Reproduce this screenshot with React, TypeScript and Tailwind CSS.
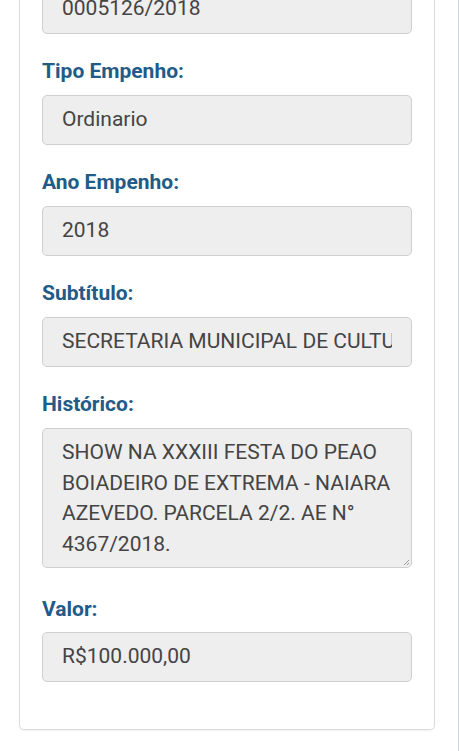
export default function App() {
  const fields: { label: string; value: string }[] = [
    { label: "Tipo Empenho:", value: "Ordinario" },
    { label: "Ano Empenho:", value: "2018" },
    { label: "Subtítulo:", value: "SECRETARIA MUNICIPAL DE CULTURA" },
  ];
  const font = { fontFamily: "Roboto, 'Noto Sans', sans-serif" };
  return (
    <div className="w-[459px] h-[751px] bg-white border-r border-[#c9d6e3] overflow-hidden" style={font}>
      <div className="ml-[19px] w-[416px] border-x border-b border-[#dcdcdc] rounded-b-[5px] shadow-[0_1px_2px_rgba(0,0,0,0.06)] px-[22px] pb-[47px]">
        <div className="-mt-[16px] h-[50px] rounded-[5px] border border-[#cfcfcf] bg-[#eeeeee] px-[19px] flex items-center text-[21px] text-[#444]">
          0005126/2018
        </div>
        {fields.map((f) => (
          <div key={f.label}>
            <div className="mt-[25px] mb-[12px] h-[24px] leading-[24px] text-[21px] font-bold text-[#215b87]">
              {f.label}
            </div>
            <div className="h-[50px] rounded-[5px] border border-[#cfcfcf] bg-[#eeeeee] px-[19px] flex items-center text-[21px] text-[#444] whitespace-nowrap overflow-hidden">
              <span className="block w-full overflow-hidden">{f.value}</span>
            </div>
          </div>
        ))}
        <div className="mt-[25px] mb-[12px] h-[24px] leading-[24px] text-[21px] font-bold text-[#215b87]">
          Histórico:
        </div>
        <div className="relative h-[140px] rounded-[5px] border border-[#cfcfcf] bg-[#eeeeee] pl-[19px] pr-[10px] pt-[8px] text-[21px] leading-[30.5px] text-[#444]">
          SHOW NA XXXIII FESTA DO PEAO BOIADEIRO DE EXTREMA - NAIARA AZEVEDO. PARCELA 2/2. AE N° 4367/2018.
          <svg className="absolute right-[1px] bottom-[1px]" width="7" height="7" viewBox="0 0 7 7">
            <path d="M6 1 L1 6 M6 4 L4 6" stroke="#9a9a9a" strokeWidth="1" />
          </svg>
        </div>
        <div className="mt-[29px] mb-[11px] h-[24px] leading-[24px] text-[21px] font-bold text-[#215b87]">
          Valor:
        </div>
        <div className="h-[50px] rounded-[5px] border border-[#cfcfcf] bg-[#eeeeee] px-[19px] flex items-center text-[21px] text-[#444]">
          R$100.000,00
        </div>
      </div>
    </div>
  );
}
